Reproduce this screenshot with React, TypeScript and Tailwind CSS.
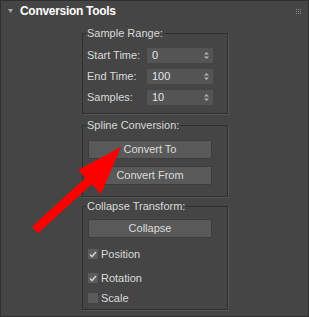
import type { ReactNode } from 'react';

const font = "font-['Liberation_Sans',Arial,sans-serif]";

function Group({ title, className, children }: { title: string; className: string; children: ReactNode }) {
  return (
    <fieldset className="w-[146px] border border-[#2f2f2f] shadow-[1px_1px_0_#555555]">
      <legend className="ml-[3px] px-[1px] leading-[13px]">{title}</legend>
      <div className={className}>{children}</div>
    </fieldset>
  );
}

function Spinner({ label, value }: { label: string; value: string }) {
  return (
    <div className="flex h-[15px] items-center">
      <span className="w-[64px] pl-[4px]">{label}</span>
      <div className="flex h-[15px] w-[66px] items-center bg-[#545454] pl-[5px] pr-[4px] text-[#e2e6ee]">
        <span className="flex-1">{value}</span>
        <svg width="5" height="9" viewBox="0 0 5 9" className="text-[#b4b4b4]">
          <path d="M2.5 1 L5 3.5 L0 3.5 Z M0 5.5 L5 5.5 L2.5 8 Z" fill="currentColor" />
        </svg>
      </div>
    </div>
  );
}

function Btn({ label }: { label: string }) {
  return (
    <button
      type="button"
      className="h-[19px] w-[124px] rounded-[2px] border border-[#3d3d3d] bg-[#595959] text-[11px] text-[#dcdcdc]"
    >
      {label}
    </button>
  );
}

function Check({ label, checked, className }: { label: string; checked: boolean; className: string }) {
  return (
    <div className={`flex h-[14px] items-center ${className}`}>
      <span className="flex h-[10px] w-[10px] items-center justify-center bg-[#5b5b5b]">
        {checked && (
          <svg width="8" height="7" viewBox="0 0 8 7">
            <path d="M1 3.5 L3 5.5 L7 1" stroke="#cfcfcf" strokeWidth="1.6" fill="none" />
          </svg>
        )}
      </span>
      <span className="ml-[3px]">{label}</span>
    </div>
  );
}

export default function App() {
  return (
    <div
      className={`relative h-[317px] w-[309px] border border-[#2f2f2f] bg-[#454545] text-[11px] text-[#dadada] ${font}`}
    >
      {/* rollout header */}
      <div className="flex h-[20px] items-center pl-[7px] pr-[7px]">
        <svg width="5" height="4" viewBox="0 0 5 4" className="text-[#a8a8a8]">
          <path d="M0 0 L5 0 L2.5 4 Z" fill="currentColor" />
        </svg>
        <span className="ml-[7px] text-[12px] font-bold tracking-[-0.3px] text-white">Conversion Tools</span>
        <svg width="5" height="5" viewBox="0 0 5 5" className="ml-auto text-[#8c8c8c]">
          {[0, 2, 4].map((y) =>
            [0, 2, 4].map((x) => <rect key={`${x}-${y}`} x={x} y={y} width="1" height="1" fill="currentColor" />)
          )}
        </svg>
      </div>

      <div className="flex flex-col gap-[5px] pl-[81px] pt-[6px]">
        <Group title="Sample Range:" className="flex flex-col gap-[6px] pt-[8px] pb-[8px]">
          <Spinner label="Start Time:" value="0" />
          <Spinner label="End Time:" value="100" />
          <Spinner label="Samples:" value="10" />
        </Group>

        <Group title="Spline Conversion:" className="flex flex-col gap-[7px] pt-[8px] pb-[11px] pl-[5px]">
          <Btn label="Convert To" />
          <Btn label="Convert From" />
        </Group>

        <div className="-mt-[2px]">
          <Group title="Collapse Transform:" className="pt-[6px] pb-[4px] pl-[5px]">
            <Btn label="Collapse" />
            <Check label="Position" checked className="mt-[9px]" />
            <Check label="Rotation" checked className="mt-[10px]" />
            <Check label="Scale" checked={false} className="mt-[6px]" />
          </Group>
        </div>
      </div>

      {/* annotation arrow */}
      <svg
        className="pointer-events-none absolute left-[-1px] top-[-1px]"
        width="309"
        height="317"
        viewBox="0 0 309 317"
      >
        <line x1="35" y1="230" x2="93" y2="177" stroke="#ff0000" strokeWidth="9" />
        <polygon points="121,147 78,170 101,194" fill="#ff0000" />
      </svg>
    </div>
  );
}
